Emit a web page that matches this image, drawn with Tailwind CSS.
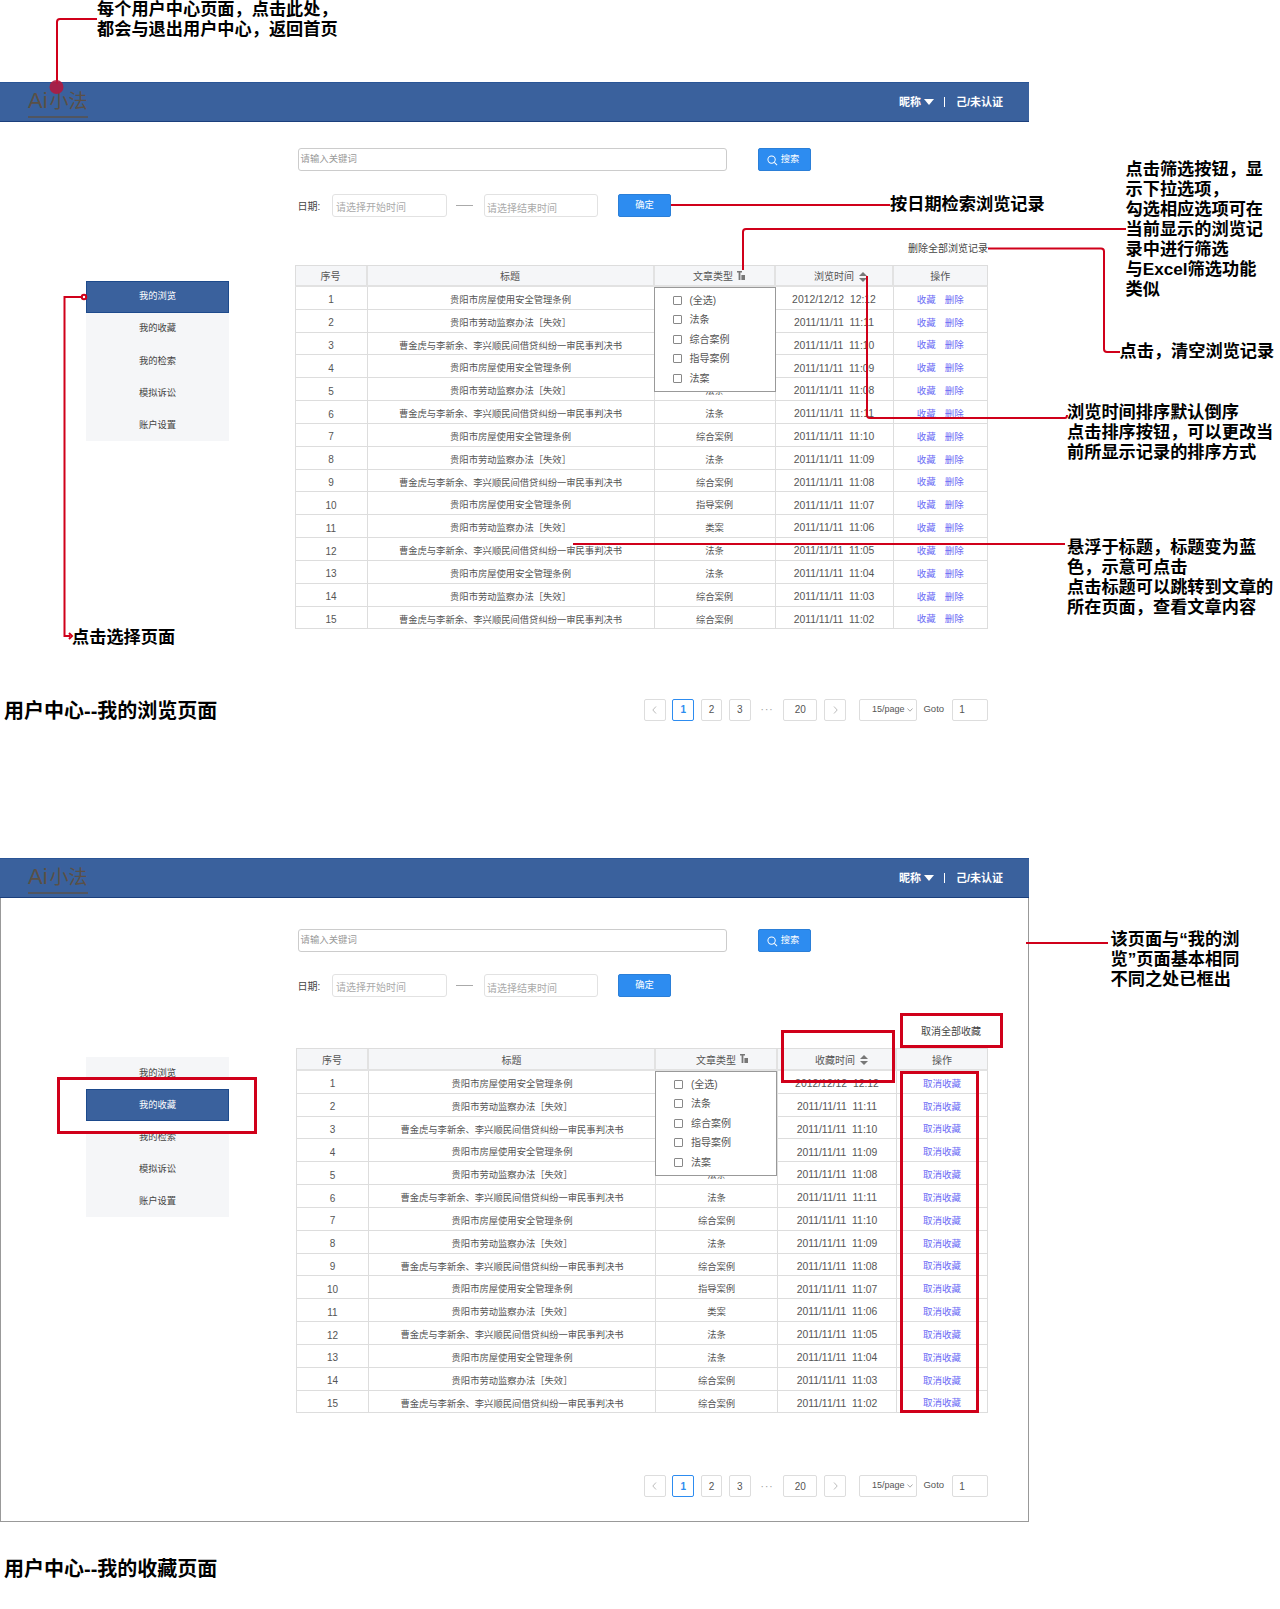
<!DOCTYPE html>
<html lang="zh">
<head>
<meta charset="utf-8">
<title>用户中心</title>
<script src="https://cdn.jsdelivr.net/npm/@tailwindcss/browser@4"></script>
</head>
<body>
<div class="relative w-[1280px] h-[1609px] bg-white overflow-hidden font-['Liberation_Sans','Noto_Sans_CJK_SC',sans-serif] text-[#555]">

  <!-- 我的浏览 -->
  <section class="absolute left-0 top-[82px] w-[1029px]">
    <header class="h-[40px] bg-[#3a619d] border-t border-t-[#2a5596] border-b border-b-[#1b3f7c] flex items-center">
      <div class="ml-[28px] w-[60px] text-[#5a5046]">
        <div class="leading-[24px] mt-[2px] whitespace-nowrap"><span class="text-[22px] mr-[2px]">Ai</span><span class="text-[19px]">小法</span></div>
        <div class="h-[2px] mt-[1px] bg-[#5a5046]/70"></div>
      </div>
      <div class="ml-auto mr-[26px] flex items-center text-[11px] font-bold text-white">
        <span>昵称</span>
        <span class="ml-[3px] w-0 h-0 border-x-[5px] border-x-transparent border-t-[6px] border-t-white"></span>
        <span class="ml-[10px] w-px h-[10px] bg-white"></span>
        <span class="ml-[11px]">己/未认证</span>
      </div>
    </header>
    <div class="flex">
      <nav class="ml-[86px] mt-[159px] w-[143px] h-[160px] bg-[#f5f6f8] text-[9.3px] text-[#444]">
        <div class="h-[32px] flex items-center justify-center bg-[#3a619d] border border-[#1d4a8c] text-white">我的浏览</div>
        <div class="h-[32px] flex items-center justify-center">我的收藏</div>
        <div class="h-[32px] pt-[1px] flex items-center justify-center">我的检索</div>
        <div class="h-[32px] pt-[1px] flex items-center justify-center">模拟诉讼</div>
        <div class="h-[32px] pt-[1px] flex items-center justify-center">账户设置</div>
      </nav>
      <div class="ml-[65.5px] w-[693.5px]">
        <div class="mt-[26px] pl-[3px] flex">
          <div class="w-[429px] h-[23px] border border-[#ccc] rounded-[3px] pl-[2px] text-[9.4px] leading-[20px] text-[#999]">请输入关键词</div>
          <button class="ml-[31.5px] w-[53px] h-[23px] pt-[1px] pr-[3px] bg-[#2d8cf0] border border-[#2b7fd8] rounded-[2px] flex items-center justify-center gap-[3px] text-[9.3px] text-white">
            <svg class="w-[11px] h-[11px]" viewBox="0 0 12 12" fill="none" stroke="white" stroke-width="1.1"><circle cx="5" cy="5" r="4"/><path d="M8 8l3 3"/></svg>
            搜索
          </button>
        </div>
        <div class="mt-[23px] pl-[3px] flex items-center h-[23px]">
          <span class="w-[34.5px] pt-[2px] text-[10px] text-[#444]">日期:</span>
          <div class="w-[115px] h-[23px] border border-[#e2e2e2] rounded-[3px] pl-[3px] text-[10px] leading-[26px] text-[#aaa]">请选择开始时间</div>
          <span class="ml-[9px] w-[17px] h-px bg-[#aaa]"></span>
          <div class="ml-[11px] w-[114px] h-[23px] border border-[#e2e2e2] rounded-[3px] pl-[2px] text-[10px] leading-[27px] text-[#aaa]">请选择结束时间</div>
          <button class="ml-[20px] w-[53px] h-[23px] bg-[#2d8cf0] border border-[#2b7fd8] rounded-[2px] text-[9.3px] text-white">确定</button>
        </div>
        <div class="h-[48px] flex items-end justify-end pb-[10px] text-[10px] leading-[12px] text-[#444] whitespace-nowrap">删除全部浏览记录</div>
        <div class="relative">
          <div class="grid grid-cols-[72px_287px_121px_118px_93.5px] h-[22px] bg-[#f5f6f8] border border-[#ddd] border-b-2 border-b-[#e2e2e2] text-[10px]">
            <div class="pt-[2px] flex items-center justify-center border-r-2 border-[#e2e2e2]">序号</div>
            <div class="pt-[2px] flex items-center justify-center border-r-2 border-[#e2e2e2]">标题</div>
            <div class="pt-[2px] pl-[10px] flex items-center justify-center gap-[4px] border-r-2 border-[#e2e2e2]">文章类型
              <svg class="w-[8px] h-[9px] -mt-[3px]" viewBox="0 0 8 9" fill="#777"><path d="M0 0h5v1.500H3.400V9H1.600V1.500H0z"/><path d="M4.400 4H8V9H4.400z"/></svg>
            </div>
            <div class="pt-[2px] pl-[14px] flex items-center justify-center gap-[5px] border-r-2 border-[#e2e2e2]">浏览时间
              <svg class="w-[8px] h-[10px]" viewBox="0 0 8 10" fill="#777"><path d="M4 0L8 4H0z"/><path d="M4 10L0 6h8z"/></svg>
            </div>
            <div class="pt-[2px] flex items-center justify-center">操作</div>
          </div>
          <div id="rows-browse" class="border-x border-[#ddd]"></div>
          <div class="absolute left-[359px] top-[22px] w-[122px] h-[105px] bg-white border border-[#999] text-[10px]">
            <div class="ml-[18px] mt-[5px] flex flex-col gap-[5.6px]">
              <label class="flex items-center gap-[8px] h-[14px]"><span class="w-[9px] h-[9px] border border-[#888] rounded-[1px]"></span>(全选)</label>
              <label class="flex items-center gap-[8px] h-[14px]"><span class="w-[9px] h-[9px] border border-[#888] rounded-[1px]"></span>法条</label>
              <label class="flex items-center gap-[8px] h-[14px]"><span class="w-[9px] h-[9px] border border-[#888] rounded-[1px]"></span>综合案例</label>
              <label class="flex items-center gap-[8px] h-[14px]"><span class="w-[9px] h-[9px] border border-[#888] rounded-[1px]"></span>指导案例</label>
              <label class="flex items-center gap-[8px] h-[14px]"><span class="w-[9px] h-[9px] border border-[#888] rounded-[1px]"></span>法案</label>
            </div>
          </div>
        </div>
        <div class="mt-[69.5px] flex items-center h-[22px] text-[10px] text-[#555]">
          <span class="ml-[349.5px] w-[22px] h-[22px] border border-[#ddd] rounded-[2px] flex items-center justify-center">
            <svg class="w-[5px] h-[8px]" viewBox="0 0 5 8" fill="none" stroke="#bbb"><path d="M4 .5L.8 4 4 7.500"/></svg>
          </span>
          <span class="ml-[6.5px] w-[22px] h-[22px] border border-[#2d8cf0] rounded-[2px] flex items-center justify-center text-[#2d8cf0] font-bold">1</span>
          <span class="ml-[6.5px] w-[22px] h-[22px] border border-[#ddd] rounded-[2px] flex items-center justify-center">2</span>
          <span class="ml-[6.5px] w-[22px] h-[22px] border border-[#ddd] rounded-[2px] flex items-center justify-center">3</span>
          <span class="w-[33px] text-center text-[#999] tracking-[1px]">···</span>
          <span class="w-[34px] h-[22px] border border-[#ddd] rounded-[2px] flex items-center justify-center">20</span>
          <span class="ml-[7px] w-[22px] h-[22px] border border-[#ddd] rounded-[2px] flex items-center justify-center">
            <svg class="w-[5px] h-[8px]" viewBox="0 0 5 8" fill="none" stroke="#bbb"><path d="M1 .5L4.200 4 1 7.500"/></svg>
          </span>
          <span class="ml-[13.5px] w-[58.5px] h-[22px] border border-[#ddd] rounded-[2px] flex items-center justify-end pr-[3px] text-[9px]">15/page
            <svg class="ml-[3px] w-[6px] h-[4px]" viewBox="0 0 6 4" fill="none" stroke="#aaa"><path d="M.5 .5L3 3.200 5.500 .5"/></svg>
          </span>
          <span class="ml-[6px] w-[29px] -mt-[2px] text-[9.5px]">Goto</span>
          <span class="w-[36px] h-[22px] border border-[#ddd] rounded-[2px] flex items-center pl-[6px]">1</span>
        </div>
      </div>
    </div>
  </section>
  <h2 class="absolute left-[4px] top-[699px] text-[20px] leading-[24px] font-bold text-black">用户中心--我的浏览页面</h2>

  <!-- 我的收藏 -->
  <section class="absolute left-0 top-[858px] w-[1029px] h-[664px] border-x border-b border-[#999]">
    <header class="-mx-px h-[40px] bg-[#3a619d] border-t border-t-[#2a5596] border-b border-b-[#1b3f7c] flex items-center">
      <div class="ml-[28px] w-[60px] text-[#5a5046]">
        <div class="leading-[24px] mt-[2px] whitespace-nowrap"><span class="text-[22px] mr-[2px]">Ai</span><span class="text-[19px]">小法</span></div>
        <div class="h-[2px] mt-[1px] bg-[#5a5046]/70"></div>
      </div>
      <div class="ml-auto mr-[26px] flex items-center text-[11px] font-bold text-white">
        <span>昵称</span>
        <span class="ml-[3px] w-0 h-0 border-x-[5px] border-x-transparent border-t-[6px] border-t-white"></span>
        <span class="ml-[10px] w-px h-[10px] bg-white"></span>
        <span class="ml-[11px]">己/未认证</span>
      </div>
    </header>
    <div class="flex">
      <nav class="relative ml-[85px] mt-[159px] w-[143px] h-[160px] bg-[#f5f6f8] text-[9.3px] text-[#444]">
        <div class="h-[32px] pt-[1px] flex items-center justify-center">我的浏览</div>
        <div class="relative z-20 h-[32px] pt-[1px] flex items-center justify-center bg-[#3a619d] border border-[#1d4a8c] text-white">我的收藏</div>
        <div class="h-[32px] pt-[1px] flex items-center justify-center">我的检索</div>
        <div class="h-[32px] pt-[1px] flex items-center justify-center">模拟诉讼</div>
        <div class="h-[32px] pt-[1px] flex items-center justify-center">账户设置</div>
        <div class="absolute z-10 left-[-29px] top-[20px] w-[200px] h-[57px] bg-white border-[3.5px] border-[#d0001a]"></div>
      </nav>
      <div class="ml-[67px] w-[692px]">
        <div class="mt-[31px] pl-[1.5px] flex">
          <div class="w-[429px] h-[23px] border border-[#ccc] rounded-[3px] pl-[2px] text-[9.4px] leading-[20px] text-[#999]">请输入关键词</div>
          <button class="ml-[31.5px] w-[53px] h-[23px] pt-[1px] pr-[3px] bg-[#2d8cf0] border border-[#2b7fd8] rounded-[2px] flex items-center justify-center gap-[3px] text-[9.3px] text-white">
            <svg class="w-[11px] h-[11px]" viewBox="0 0 12 12" fill="none" stroke="white" stroke-width="1.1"><circle cx="5" cy="5" r="4"/><path d="M8 8l3 3"/></svg>
            搜索
          </button>
        </div>
        <div class="mt-[22px] pl-[1.5px] flex items-center h-[23px]">
          <span class="w-[34.5px] pt-[2px] text-[10px] text-[#444]">日期:</span>
          <div class="w-[115px] h-[23px] border border-[#e2e2e2] rounded-[3px] pl-[3px] text-[10px] leading-[26px] text-[#aaa]">请选择开始时间</div>
          <span class="ml-[9px] w-[17px] h-px bg-[#aaa]"></span>
          <div class="ml-[11px] w-[114px] h-[23px] border border-[#e2e2e2] rounded-[3px] pl-[2px] text-[10px] leading-[27px] text-[#aaa]">请选择结束时间</div>
          <button class="ml-[20px] w-[53px] h-[23px] bg-[#2d8cf0] border border-[#2b7fd8] rounded-[2px] text-[9.3px] text-white">确定</button>
        </div>
        <div class="h-[51px] flex items-end justify-end pb-[10px] pr-[7px] text-[10px] leading-[12px] text-[#444] whitespace-nowrap">取消全部收藏</div>
        <div class="relative">
          <div class="grid grid-cols-[72px_287px_122px_119px_90px] h-[23px] bg-[#f5f6f8] border border-[#ddd] border-b-2 border-b-[#e2e2e2] text-[10px]">
            <div class="pt-[2px] flex items-center justify-center border-r-2 border-[#e2e2e2]">序号</div>
            <div class="pt-[2px] flex items-center justify-center border-r-2 border-[#e2e2e2]">标题</div>
            <div class="pt-[2px] pl-[12px] flex items-center justify-center gap-[4px] border-r-2 border-[#e2e2e2]">文章类型
              <svg class="w-[8px] h-[9px] -mt-[3px]" viewBox="0 0 8 9" fill="#777"><path d="M0 0h5v1.500H3.400V9H1.600V1.500H0z"/><path d="M4.400 4H8V9H4.400z"/></svg>
            </div>
            <div class="pt-[2px] pl-[10px] flex items-center justify-center gap-[5px] border-r-2 border-[#e2e2e2]">收藏时间
              <svg class="w-[8px] h-[10px]" viewBox="0 0 8 10" fill="#777"><path d="M4 0L8 4H0z"/><path d="M4 10L0 6h8z"/></svg>
            </div>
            <div class="pt-[2px] flex items-center justify-center">操作</div>
          </div>
          <div id="rows-fav" class="border-x border-[#ddd]"></div>
          <div class="absolute left-[359px] top-[23px] w-[122px] h-[105px] bg-white border border-[#999] text-[10px]">
            <div class="ml-[18px] mt-[5px] flex flex-col gap-[5.6px]">
              <label class="flex items-center gap-[8px] h-[14px]"><span class="w-[9px] h-[9px] border border-[#888] rounded-[1px]"></span>(全选)</label>
              <label class="flex items-center gap-[8px] h-[14px]"><span class="w-[9px] h-[9px] border border-[#888] rounded-[1px]"></span>法条</label>
              <label class="flex items-center gap-[8px] h-[14px]"><span class="w-[9px] h-[9px] border border-[#888] rounded-[1px]"></span>综合案例</label>
              <label class="flex items-center gap-[8px] h-[14px]"><span class="w-[9px] h-[9px] border border-[#888] rounded-[1px]"></span>指导案例</label>
              <label class="flex items-center gap-[8px] h-[14px]"><span class="w-[9px] h-[9px] border border-[#888] rounded-[1px]"></span>法案</label>
            </div>
          </div>
          <!-- 红框标注 -->
          <div class="absolute z-20 left-[485px] top-[-18px] w-[114px] h-[53px] border-[3.5px] border-[#d0001a]"></div>
          <div class="absolute z-20 left-[604px] top-[-35px] w-[103px] h-[35px] border-[3.5px] border-[#d0001a]"></div>
          <div class="absolute z-20 left-[604px] top-[23px] w-[79px] h-[342px] border-[3.5px] border-[#d0001a]"></div>
        </div>
        <div class="mt-[61.7px] flex items-center h-[22px] text-[10px] text-[#555]">
          <span class="ml-[348px] w-[22px] h-[22px] border border-[#ddd] rounded-[2px] flex items-center justify-center">
            <svg class="w-[5px] h-[8px]" viewBox="0 0 5 8" fill="none" stroke="#bbb"><path d="M4 .5L.8 4 4 7.500"/></svg>
          </span>
          <span class="ml-[6.5px] w-[22px] h-[22px] border border-[#2d8cf0] rounded-[2px] flex items-center justify-center text-[#2d8cf0] font-bold">1</span>
          <span class="ml-[6.5px] w-[22px] h-[22px] border border-[#ddd] rounded-[2px] flex items-center justify-center">2</span>
          <span class="ml-[6.5px] w-[22px] h-[22px] border border-[#ddd] rounded-[2px] flex items-center justify-center">3</span>
          <span class="w-[33px] text-center text-[#999] tracking-[1px]">···</span>
          <span class="w-[34px] h-[22px] border border-[#ddd] rounded-[2px] flex items-center justify-center">20</span>
          <span class="ml-[7px] w-[22px] h-[22px] border border-[#ddd] rounded-[2px] flex items-center justify-center">
            <svg class="w-[5px] h-[8px]" viewBox="0 0 5 8" fill="none" stroke="#bbb"><path d="M1 .5L4.200 4 1 7.500"/></svg>
          </span>
          <span class="ml-[13.5px] w-[58.5px] h-[22px] border border-[#ddd] rounded-[2px] flex items-center justify-end pr-[3px] text-[9px]">15/page
            <svg class="ml-[3px] w-[6px] h-[4px]" viewBox="0 0 6 4" fill="none" stroke="#aaa"><path d="M.5 .5L3 3.200 5.500 .5"/></svg>
          </span>
          <span class="ml-[6px] w-[29px] -mt-[2px] text-[9.5px]">Goto</span>
          <span class="w-[36px] h-[22px] border border-[#ddd] rounded-[2px] flex items-center pl-[6px]">1</span>
        </div>
      </div>
    </div>
  </section>
  <h2 class="absolute left-[4px] top-[1556.5px] text-[20px] leading-[24px] font-bold text-black">用户中心--我的收藏页面</h2>

  <!-- annotation lines -->
  <svg class="absolute left-0 top-0 z-30 pointer-events-none" width="1280" height="1609" fill="none" stroke="#d0001a" stroke-width="2">
    <path d="M97 19H60q-3 0-3 3V84"/>
    <circle cx="56.5" cy="87" r="7" fill="#b01a40" fill-opacity="0.9" stroke="none"/>
    <path d="M671 205H890"/>
    <path d="M1126 229H746q-3 0-3 3V270"/>
    <path d="M988 248.5H1101q3 0 3 3V349q0 3 3 3H1120"/>
    <path d="M867 276V415q0 3 3 3H1065q2 0 2-3"/>
    <path d="M573 544H1065"/>
    <path d="M84 297H64.5V636H70"/>
    <circle cx="84" cy="297" r="2.2" fill="#fff"/>
    <path d="M69 633l3 3-3 3"/>
    <path d="M1026 943H1108"/>
  </svg>

  <!-- annotation texts -->
  <div class="absolute z-30 left-[97px] top-[-1px] text-[17.2px] leading-[20px] font-bold text-black whitespace-nowrap">每个用户中心页面，点击此处，<br>都会与退出用户中心，返回首页</div>
  <div class="absolute z-30 left-[890px] top-[194px] text-[17.2px] leading-[20px] font-bold text-black whitespace-nowrap">按日期检索浏览记录</div>
  <div class="absolute z-30 left-[1125.5px] top-[159px] w-[140px] text-[17.2px] leading-[20px] font-bold text-black">点击筛选按钮，显<br>示下拉选项，<br>勾选相应选项可在<br>当前显示的浏览记<br>录中进行筛选<br>与Excel筛选功能<br>类似</div>
  <div class="absolute z-30 left-[1119.5px] top-[341px] text-[17.2px] leading-[20px] font-bold text-black whitespace-nowrap">点击，清空浏览记录</div>
  <div class="absolute z-30 left-[1067px] top-[402px] text-[17.2px] leading-[20px] font-bold text-black whitespace-nowrap">浏览时间排序默认倒序<br>点击排序按钮，可以更改当<br>前所显示记录的排序方式</div>
  <div class="absolute z-30 left-[1067px] top-[537px] text-[17.2px] leading-[20px] font-bold text-black whitespace-nowrap">悬浮于标题，标题变为蓝<br>色，示意可点击<br>点击标题可以跳转到文章的<br>所在页面，查看文章内容</div>
  <div class="absolute z-30 left-[72px] top-[627px] text-[17.2px] leading-[20px] font-bold text-black whitespace-nowrap">点击选择页面</div>
  <div class="absolute z-30 left-[1110.5px] top-[929px] text-[17.2px] leading-[20px] font-bold text-black whitespace-nowrap">该页面与“我的浏<br>览”页面基本相同<br>不同之处已框出</div>
</div>

<script>
const titles = ["贵阳市房屋使用安全管理条例", "贵阳市劳动监察办法［失效］", "曹金虎与李新余、李兴顺民间借贷纠纷一审民事判决书"];
// first four type cells sit under the filter dropdown
const types = ["", "", "", "", "法条", "法条", "综合案例", "法条", "综合案例", "指导案例", "类案", "法条", "法条", "综合案例", "综合案例"];
const times = ["2012/12/12  12:12", "2011/11/11  11:11", "2011/11/11  11:10", "2011/11/11  11:09", "2011/11/11  11:08", "2011/11/11  11:11", "2011/11/11  11:10", "2011/11/11  11:09", "2011/11/11  11:08", "2011/11/11  11:07", "2011/11/11  11:06", "2011/11/11  11:05", "2011/11/11  11:04", "2011/11/11  11:03", "2011/11/11  11:02"];

function rows(colsClass, ops) {
  return times.map((time, i) => `
    <div class="grid ${colsClass} h-[22.83px] border-b border-[#ddd] text-[9.3px]">
      <div class="pt-[4px] flex items-center justify-center border-r border-[#ddd] text-[10px]">${i + 1}</div>
      <div class="pt-[6px] flex items-center justify-center border-r border-[#ddd] whitespace-nowrap">${titles[i % 3]}</div>
      <div class="pt-[6px] flex items-center justify-center border-r border-[#ddd]">${types[i]}</div>
      <div class="pt-[4px] flex items-center justify-center border-r border-[#ddd] text-[10.4px] whitespace-pre">${time}</div>
      <div class="pt-[4px] flex items-center justify-center gap-[9px] text-[9.5px] text-[#6b6bf5]">${ops}</div>
    </div>`).join("");
}

document.getElementById("rows-browse").innerHTML = rows("grid-cols-[72px_287px_121px_118px_93.5px]", "<a>收藏</a><a>删除</a>");
document.getElementById("rows-fav").innerHTML = rows("grid-cols-[72px_287px_122px_119px_90px]", "<a>取消收藏</a>");
</script>
</body>
</html>
